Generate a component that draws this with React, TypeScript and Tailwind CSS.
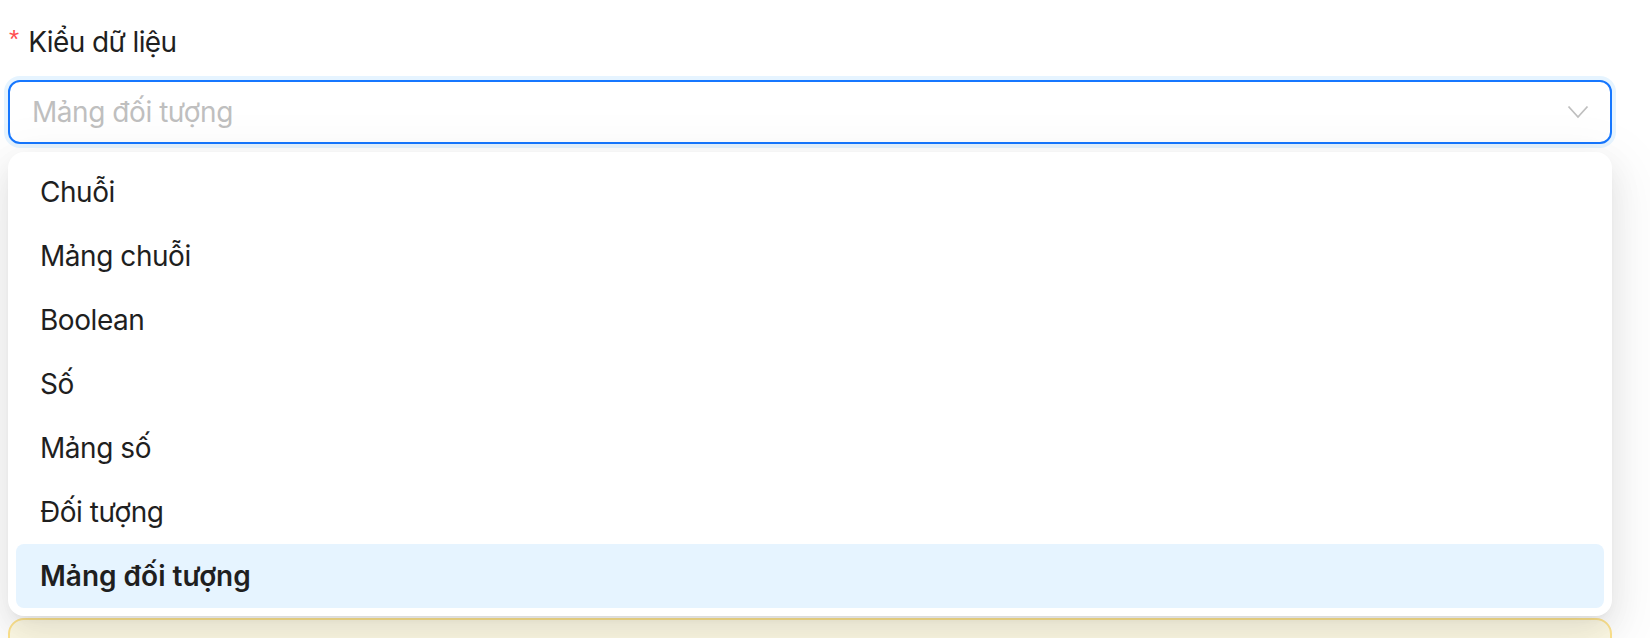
import React from "react";

const items = ["Chuỗi", "Mảng chuỗi", "Boolean", "Số", "Mảng số", "Đối tượng", "Mảng đối tượng"];

export default function App() {
  return (
    <div
      className="h-[638px] overflow-hidden bg-white pl-2 pr-[38px] pt-5 text-[28px] text-[#1f1f1f]"
      style={{ fontFamily: "Inter, 'Noto Sans', sans-serif" }}
    >
      <div className="flex h-[44px] items-center leading-[44px]">
        <span className="mr-[9px] ml-[1px] mt-[-6px] text-[26px] leading-none text-[#ff4d4f]" style={{ fontFamily: "'Liberation Sans', sans-serif" }}>*</span>
        <span className="tracking-[-0.6px]">Kiểu dữ liệu</span>
      </div>
      <div className="relative mt-4">
        <div className="flex h-16 items-center justify-between rounded-[12px] border-2 border-[#1677ff] bg-white px-[22px] shadow-[0_0_0_4px_rgba(5,145,255,0.1)]">
          <span className="leading-[44px] tracking-[-0.45px] text-[#bfbfbf]">Mảng đối tượng</span>
          <svg width="22" height="14" viewBox="0 0 22 14" fill="none" className="mr-[-1px]">
            <polyline points="1.5,1.5 11,12 20.5,1.5" stroke="#bfbfbf" strokeWidth="1.8" strokeLinejoin="miter" />
          </svg>
        </div>
        <div className="absolute left-0 right-0 top-[calc(100%+8px)] z-10 rounded-[16px] bg-white p-2 shadow-[0_12px_32px_0_rgba(0,0,0,0.08),0_6px_12px_-8px_rgba(0,0,0,0.12),0_18px_56px_16px_rgba(0,0,0,0.05)]">
          {items.map((it, i) => {
            const sel = i === items.length - 1;
            return (
              <div
                key={it}
                className={
                  "flex h-16 items-center rounded-[8px] px-6 leading-[44px] " +
                  (sel ? "bg-[#e6f4ff] font-semibold" : "tracking-[-0.45px]")
                }
              >
                {it}
              </div>
            );
          })}
        </div>
      </div>
      <div className="mt-[474px] h-[80px] rounded-[16px] border-2 border-[#ffe58f] bg-[#fffbe6]" />
    </div>
  );
}
